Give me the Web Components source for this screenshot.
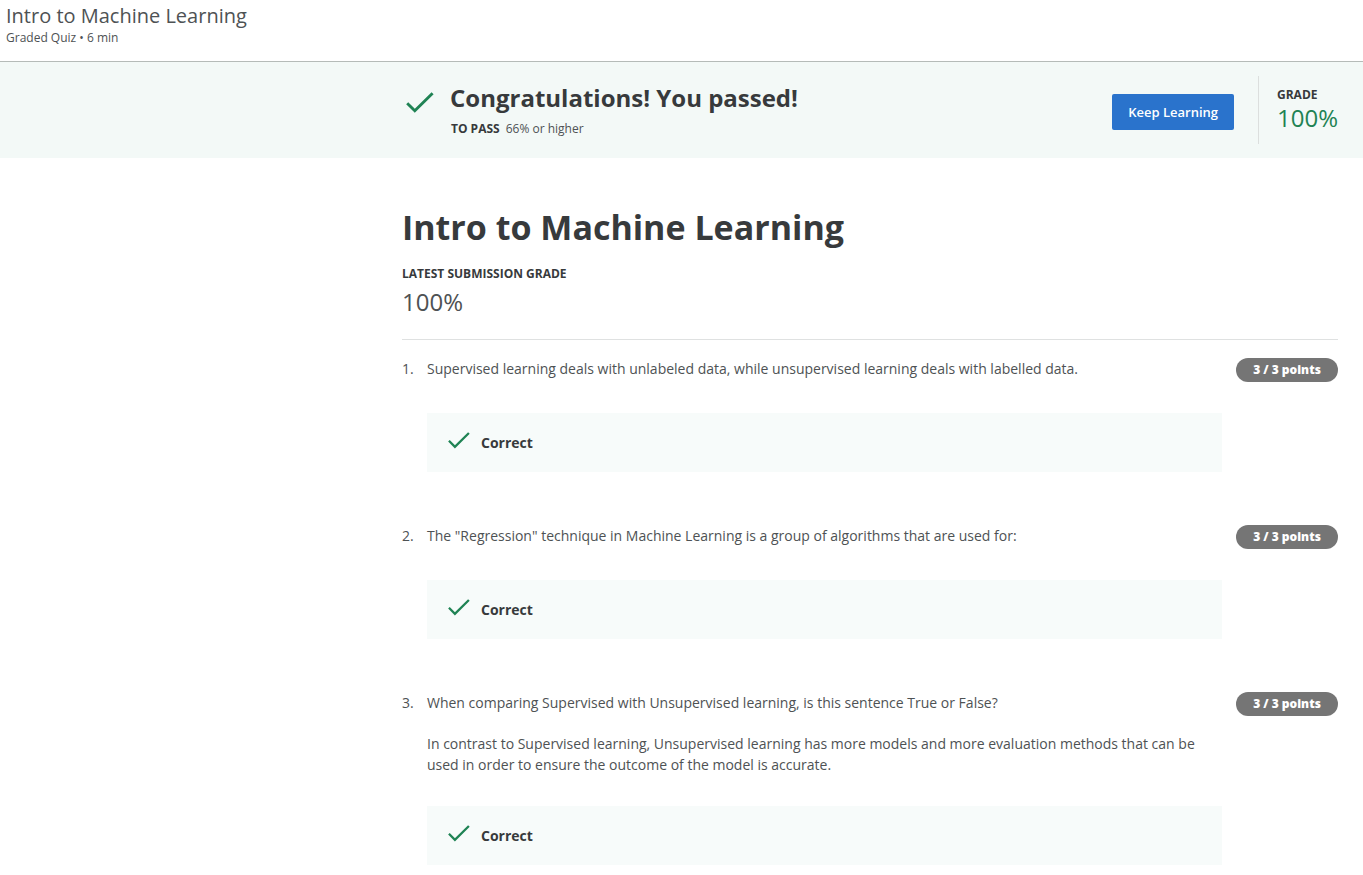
<!DOCTYPE html>
<html lang="en">
<head>
<meta charset="utf-8">
<meta name="viewport" content="width=device-width, initial-scale=1">
<title>Intro to Machine Learning</title>
<style>
  body {
    margin: 0;
    background: #fff;
    color: #373a3c;
    font-family: "Open Sans", Arial, sans-serif;
    font-size: 14px;
    line-height: 21px;
    --inset: 402px;
    --edge: 25px;
    --green: #1f8354;
    --soft: #4e5254;
  }
  @media (max-width: 900px) { body { --inset: 24px; } }
</style>
</head>
<body>
<quiz-header heading="Intro to Machine Learning">Graded Quiz • 6 min</quiz-header>
<result-banner grade="100%" threshold="66% or higher">Congratulations! You passed!</result-banner>
<quiz-report heading="Intro to Machine Learning" grade="100%">
  <quiz-question number="1" points="3 / 3 points">
    <question-text>Supervised learning deals with unlabeled data, while unsupervised learning deals with labelled data.</question-text>
  </quiz-question>
  <quiz-question number="2" points="3 / 3 points">
    <question-text>The "Regression" technique in Machine Learning is a group of algorithms that are used for:</question-text>
  </quiz-question>
  <quiz-question number="3" points="3 / 3 points">
    <question-text>When comparing Supervised with Unsupervised learning, is this sentence True or False?</question-text>
    <question-text>In contrast to Supervised learning, Unsupervised learning has more models and more evaluation methods that can be used in order to ensure the outcome of the model is accurate.</question-text>
  </quiz-question>
</quiz-report>

<script>
class Base extends HTMLElement {
  connectedCallback() {
    if (this.shadowRoot) return;
    this.attachShadow({ mode: "open" }).innerHTML = this.view();
  }
  attr(name) { return this.getAttribute(name) || ""; }
}

customElements.define("check-icon", class extends Base {
  view() {
    return `<style>
      :host { display: block; flex: none; color: var(--green); }
      svg { display: block; width: 100%; height: auto; }
    </style>
    <svg viewBox="0 0 28 21" fill="none" stroke="currentColor" stroke-width="2.9" aria-hidden="true"><path d="M1.2 11.2 8.8 18.8 26.6 1.2"/></svg>`;
  }
});

customElements.define("quiz-header", class extends Base {
  view() {
    return `<style>
      :host { display: block; box-sizing: border-box; min-height: 62px; padding: 2px 6px 14px; border-bottom: 1px solid #b5bbb8; color: var(--soft); }
      h2 { margin: 0; font-size: 20px; line-height: 27px; font-weight: 400; }
      p { margin: 0; font-size: 12px; line-height: 18px; }
    </style>
    <h2>${this.attr("heading")}</h2><p><slot></slot></p>`;
  }
});

customElements.define("result-banner", class extends Base {
  view() {
    return `<style>
      :host { display: flex; align-items: center; box-sizing: border-box; min-height: 96px; padding: 14px var(--edge) 14px calc(var(--inset) + 4px); background: #f3f9f7; }
      check-icon { width: 28px; margin: 0 16px 16px 0; }
      .message { flex: 1; }
      h2 { margin: 0; font-size: 24px; line-height: 32px; font-weight: 700; }
      p { display: flex; gap: 6px; margin: 6px 0 0; padding-left: 1px; font-size: 12px; line-height: 18px; }
      p span { color: var(--soft); }
      strong { font-weight: 700; }
      button { height: 36px; margin-top: 4px; padding: 0 16px; border: 0; border-radius: 2px; background: #2a73cc; color: #fff; font: 600 13px/18px "Open Sans", Arial, sans-serif; cursor: pointer; }
      .grade { display: flex; flex-direction: column; box-sizing: border-box; height: 68px; margin-left: 24px; padding: 10px 0 0 18px; border-left: 1px solid #dcdfde; }
      .grade strong { font-size: 12px; line-height: 18px; }
      .grade span { color: var(--green); font-size: 24px; line-height: 28px; }
    </style>
    <check-icon></check-icon>
    <div class="message"><h2><slot></slot></h2><p><strong>TO PASS</strong><span>${this.attr("threshold")}</span></p></div>
    <button type="button">Keep Learning</button>
    <div class="grade"><strong>GRADE</strong><span>${this.attr("grade")}</span></div>`;
  }
});

customElements.define("quiz-report", class extends Base {
  view() {
    return `<style>
      :host { display: block; padding: 45px var(--edge) 0 var(--inset); }
      h1 { margin: 0; font-size: 34px; line-height: 48px; font-weight: 700; }
      h3 { margin: 14px 0 0; font-size: 12px; line-height: 18px; font-weight: 700; }
      .grade { margin: 3px 0 0; padding-bottom: 21px; border-bottom: 1px solid #dfe1e1; color: var(--soft); font-size: 24px; line-height: 32px; font-weight: 400; }
      .questions { display: grid; gap: 53px; padding: 18px 0 10px; }
    </style>
    <h1>${this.attr("heading")}</h1>
    <h3>LATEST SUBMISSION GRADE</h3>
    <p class="grade">${this.attr("grade")}</p>
    <div class="questions"><slot></slot></div>`;
  }
});

customElements.define("question-text", class extends Base {
  view() {
    return `<style>:host { display: block; }</style><slot></slot>`;
  }
});

customElements.define("quiz-question", class extends Base {
  view() {
    return `<style>
      :host { display: grid; grid-template-columns: 25px minmax(0, 1fr) 102px; row-gap: 31px; color: var(--soft); }
      .body { display: grid; gap: 20px; align-content: start; padding-right: 14px; }
      .points { height: 24px; border-radius: 12px; background: #757575; color: #fff; font-size: 12px; line-height: 24px; font-weight: 800; text-align: center; }
      correct-notice { grid-column: 2; margin-right: 14px; }
    </style>
    <span>${this.attr("number")}.</span>
    <div class="body"><slot></slot></div>
    <span class="points">${this.attr("points")}</span>
    <correct-notice>Correct</correct-notice>`;
  }
});

customElements.define("correct-notice", class extends Base {
  view() {
    return `<style>
      :host { display: flex; align-items: center; gap: 11px; padding: 19px 21px; background: #f7fbfa; color: #373a3c; font-weight: 700; }
      check-icon { width: 22px; margin-bottom: 4px; }
    </style>
    <check-icon></check-icon><span><slot></slot></span>`;
  }
});
</script>
</body>
</html>
